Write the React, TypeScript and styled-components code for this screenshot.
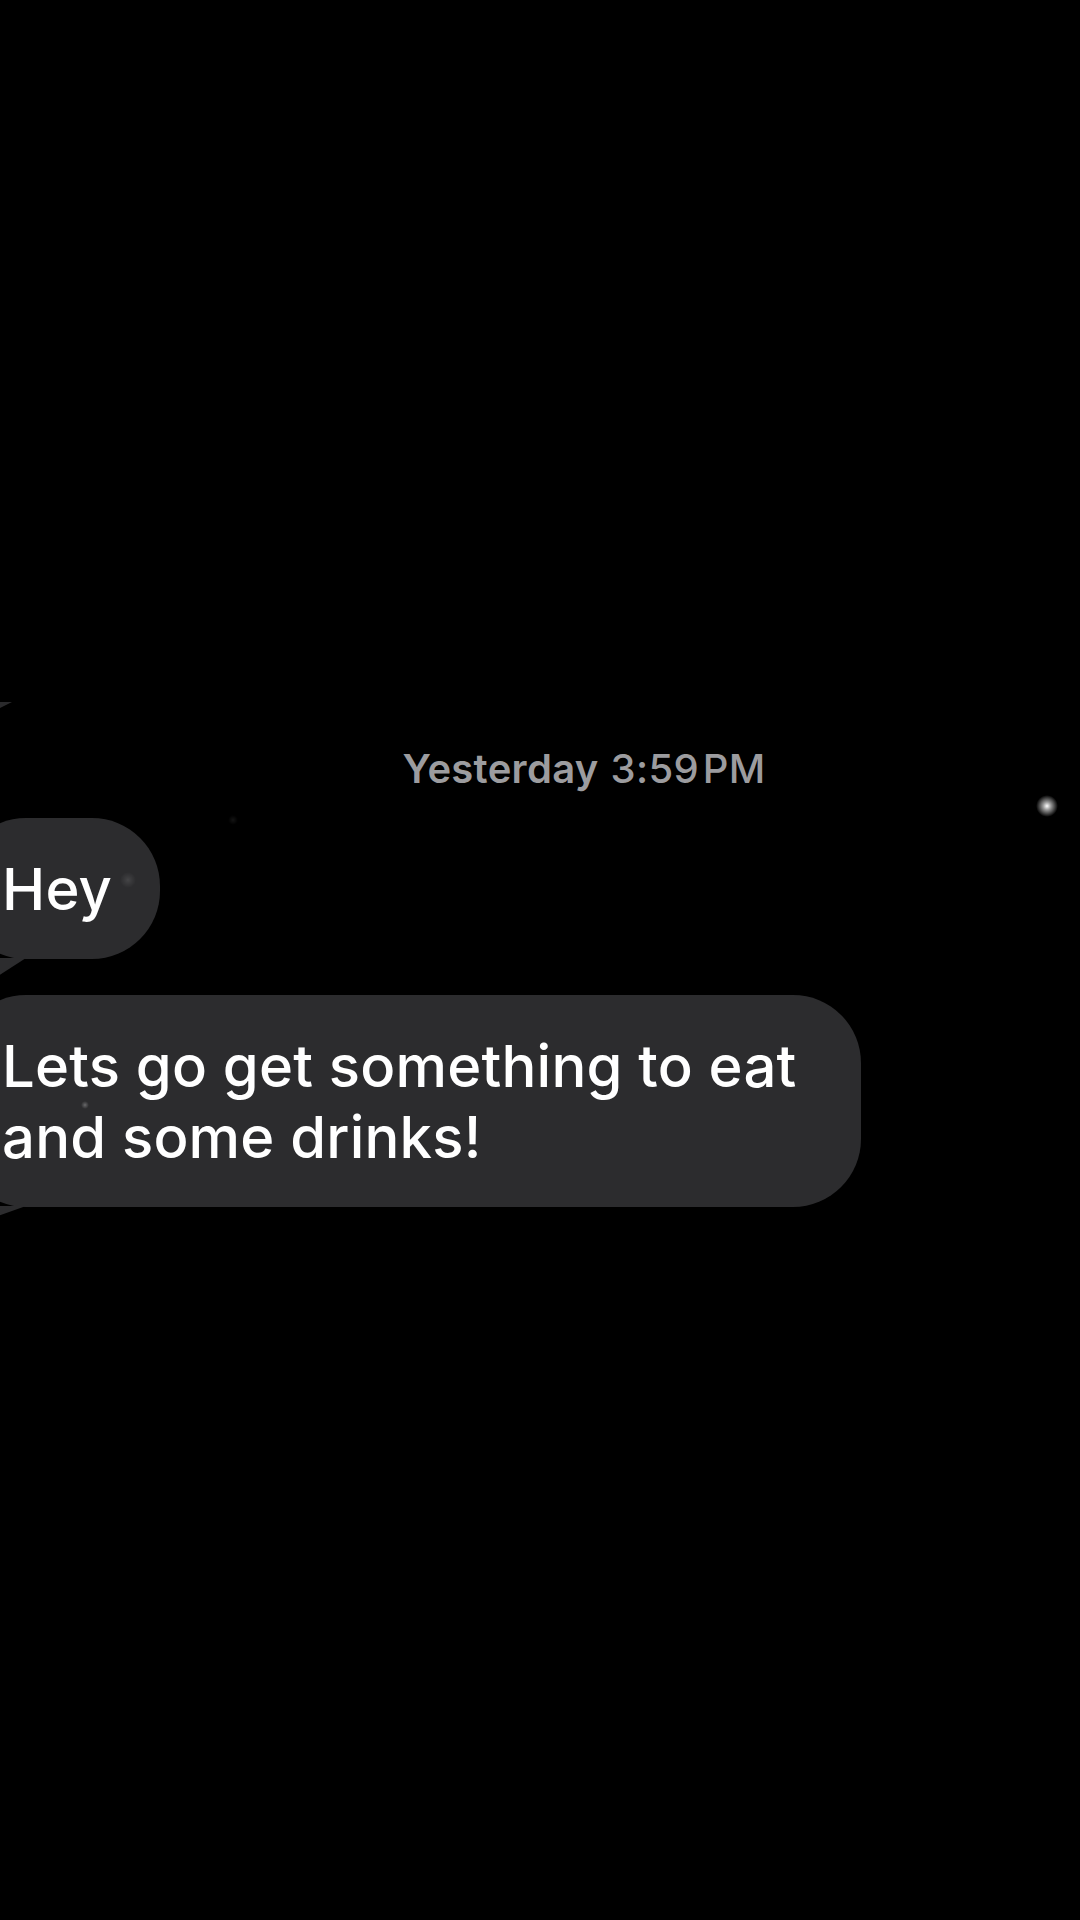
import React from "react";
import styled, { createGlobalStyle } from "styled-components";

const GlobalStyle = createGlobalStyle`
  html, body {
    margin: 0;
    padding: 0;
    background: #000;
  }
  body {
    font-family: Inter, "Noto Sans", "Liberation Sans", sans-serif;
    -webkit-font-smoothing: antialiased;
  }
`;

const Screen = styled.div`
  position: relative;
  width: 1080px;
  height: 1920px;
  overflow: hidden;
  background: #000;
`;

const Thread = styled.div`
  display: flex;
  flex-direction: column;
  align-items: flex-start;
  padding-top: 702px;
`;

// tip of a tail from a bubble further up the thread
const TailSliver = styled.div`
  width: 12px;
  height: 6px;
  background: #2a2a2c;
  clip-path: polygon(0 0, 100% 0, 0 100%);
`;

const Stamp = styled.div`
  align-self: stretch;
  display: flex;
  justify-content: center;
  padding-left: 88px;
  margin-top: 37px;
  font-size: 40px;
  line-height: 48px;
  color: #9c9c9f;
  letter-spacing: 0.3px;

  b {
    font-weight: 600;
    margin-right: 12px;
  }

  span {
    font-weight: 500;
  }
`;

const Bubble = styled.div<{ $wide?: boolean; $tail: number; $gap: number }>`
  position: relative;
  box-sizing: border-box;
  margin-left: -42px;
  margin-top: ${(p) => p.$gap}px;
  padding: 36px ${(p) => (p.$wide ? 40 : 48)}px 34px 44px;
  ${(p) => (p.$wide ? "width: 903px;" : "")}
  background: #2c2c2e;
  border-radius: 68px;
  color: #fff;
  font-size: 58px;
  line-height: 71px;
  font-weight: 500;
  letter-spacing: 0.2px;

  &::after {
    content: "";
    position: absolute;
    left: 40px;
    bottom: -${(p) => p.$tail}px;
    width: 28px;
    height: ${(p) => p.$tail + 1}px;
    background: #2c2c2e;
    clip-path: polygon(0 0, 100% 0, 0 100%);
  }
`;

const Sparkle = styled.div<{ $x: number; $y: number; $size: number; $alpha: number }>`
  position: absolute;
  left: ${(p) => p.$x - p.$size / 2}px;
  top: ${(p) => p.$y - p.$size / 2}px;
  width: ${(p) => p.$size}px;
  height: ${(p) => p.$size}px;
  border-radius: 50%;
  opacity: ${(p) => p.$alpha};
  background: radial-gradient(
    circle,
    rgba(255, 255, 255, 1) 0%,
    rgba(255, 255, 255, 0.6) 25%,
    rgba(255, 255, 255, 0) 70%
  );
`;

export default function App() {
  return (
    <Screen>
      <GlobalStyle />
      <Thread>
        <TailSliver />
        <Stamp>
          <b>Yesterday</b>
          <span>3:59&#8202;PM</span>
        </Stamp>
        <Bubble $tail={17} $gap={25}>Hey</Bubble>
        <Bubble $wide $tail={9} $gap={36}>
          Lets go get something to eat and some drinks!
        </Bubble>
      </Thread>
      <Sparkle $x={1047} $y={806} $size={22} $alpha={1} />
      <Sparkle $x={128} $y={880} $size={16} $alpha={0.12} />
      <Sparkle $x={85} $y={1105} $size={8} $alpha={0.3} />
      <Sparkle $x={233} $y={820} $size={10} $alpha={0.08} />
    </Screen>
  );
}
